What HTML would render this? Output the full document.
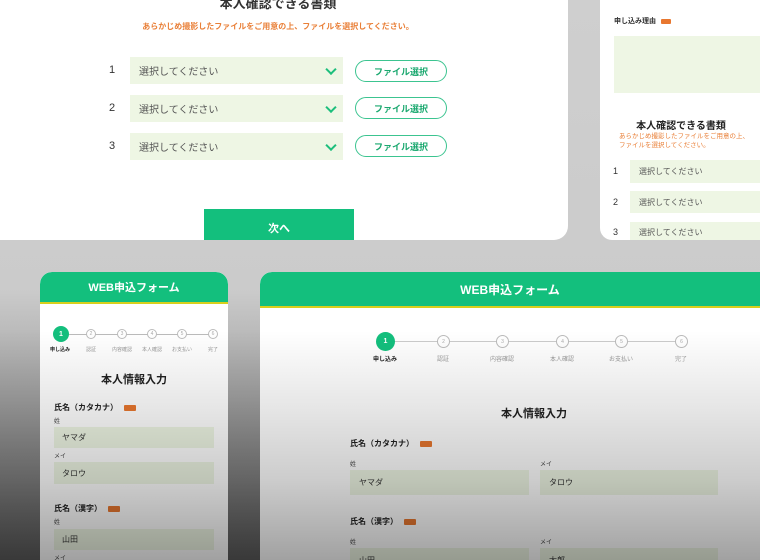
<!DOCTYPE html>
<html><head><meta charset="utf-8"><style>
*{margin:0;padding:0;box-sizing:border-box}
html,body{width:760px;height:560px;overflow:hidden}
body{position:relative;font-family:"Liberation Sans","Noto Sans CJK JP",sans-serif;background:linear-gradient(#cfcfcf 0,#cbcbcb 290px,#a0a0a0 400px,#5a5a5a 560px)}
.a{position:absolute}
.card{position:absolute;background:#fff}
.t{position:absolute;white-space:nowrap}
.sel{position:absolute;background:#eef6e4;color:#555;font-size:10px;padding-left:9px;display:flex;align-items:center}
.chev{position:absolute;right:8px;top:50%;width:8px;height:8px;border-right:2px solid #1cbf7c;border-bottom:2px solid #1cbf7c;transform:translateY(-70%) rotate(45deg)}
.btn{position:absolute;border:1px solid #3cc490;border-radius:12px;color:#1aa86f;font-size:9px;font-weight:bold;display:flex;align-items:center;justify-content:center}
.num{position:absolute;font-size:11px;color:#333}
.hdr{position:absolute;left:0;right:0;top:0;background:#13bf7d;color:#fff;font-weight:bold;display:flex;align-items:center;justify-content:center;border-bottom:2px solid #d8cf1c}
.badge{display:inline-block;background:#e8772f;width:12px;height:6px;border-radius:1px;vertical-align:middle;margin-left:6px}
.inp{position:absolute;background:#eef6e4;color:#333;display:flex;align-items:center}
.lbl{position:absolute;font-weight:bold;color:#222;white-space:nowrap}
.sm{position:absolute;color:#444;white-space:nowrap}
.c{position:absolute;border-radius:50%;border:1px solid #bbb;background:#fff;color:#aaa;display:flex;align-items:center;justify-content:center}
.c1{border:none;background:#13bf7d;color:#fff;font-weight:bold}
.line{position:absolute;height:1px;background:#bbb}
.sl{position:absolute;color:#999;white-space:nowrap;transform:translateX(-50%)}
</style></head><body>

<div class="card" style="left:0;top:-20px;width:568px;height:260px;border-bottom-right-radius:14px"></div>
<div class="t" style="left:0;width:556px;top:-7px;text-align:center;font-size:13px;font-weight:bold;color:#333">本人確認できる書類</div>
<div class="t" style="left:0;width:556px;top:21px;text-align:center;font-size:8px;font-weight:bold;color:#e97f37">あらかじめ撮影したファイルをご用意の上、ファイルを選択してください。</div>
<div class="num" style="left:109px;top:64px">1</div>
<div class="sel" style="left:130px;top:57px;width:213px;height:27px">選択してください<span class="chev"></span></div>
<div class="btn" style="left:355px;top:60px;width:92px;height:22px">ファイル選択</div>
<div class="num" style="left:109px;top:102px">2</div>
<div class="sel" style="left:130px;top:95px;width:213px;height:27px">選択してください<span class="chev"></span></div>
<div class="btn" style="left:355px;top:97px;width:92px;height:22px">ファイル選択</div>
<div class="num" style="left:109px;top:140px">3</div>
<div class="sel" style="left:130px;top:133px;width:213px;height:27px">選択してください<span class="chev"></span></div>
<div class="btn" style="left:355px;top:135px;width:92px;height:22px">ファイル選択</div>
<div class="a" style="left:204px;top:209px;width:150px;height:31px;background:#13bf7d;color:#fff;font-size:11px;font-weight:bold;text-align:center;padding-top:11px">次へ</div>

<div class="card" style="left:600px;top:-20px;width:180px;height:260px;border-bottom-left-radius:12px"></div>
<div class="t" style="left:614px;top:16px;font-size:7px;font-weight:bold;color:#333">申し込み理由<span class="badge" style="width:10px;height:5px;margin-left:5px"></span></div>
<div class="a" style="left:614px;top:36px;width:160px;height:57px;background:#eef6e4"></div>
<div class="t" style="left:606px;width:150px;top:117px;text-align:center;font-size:10px;font-weight:bold;color:#222">本人確認できる書類</div>
<div class="t" style="left:619px;top:132px;font-size:6.5px;line-height:9px;color:#e97f37">あらかじめ撮影したファイルをご用意の上、<br>ファイルを選択してください。</div>
<div class="num" style="left:613px;top:166px;font-size:9px">1</div>
<div class="sel" style="left:630px;top:160px;width:140px;height:23px;font-size:8px">選択してください</div>
<div class="num" style="left:613px;top:197px;font-size:9px">2</div>
<div class="sel" style="left:630px;top:191px;width:140px;height:22px;font-size:8px">選択してください</div>
<div class="num" style="left:613px;top:227px;font-size:9px">3</div>
<div class="sel" style="left:630px;top:222px;width:140px;height:18px;font-size:8px;align-items:flex-start;padding-top:5px">選択してください</div>

<div class="card" style="left:40px;top:272px;width:188px;height:288px;border-radius:12px 12px 0 0;overflow:hidden">
<div class="hdr" style="height:32px;font-size:11px;border-radius:12px 12px 0 0">WEB申込フォーム</div>
</div>
<div class="line" style="left:61px;top:334px;width:152px"></div>
<div class="c c1" style="left:53px;top:326px;width:16px;height:16px;font-size:7px">1</div>
<div class="c" style="left:86px;top:329px;width:10px;height:10px;font-size:5px">2</div>
<div class="c" style="left:117px;top:329px;width:10px;height:10px;font-size:5px">3</div>
<div class="c" style="left:147px;top:329px;width:10px;height:10px;font-size:5px">4</div>
<div class="c" style="left:177px;top:329px;width:10px;height:10px;font-size:5px">5</div>
<div class="c" style="left:208px;top:329px;width:10px;height:10px;font-size:5px">6</div>
<div class="sl" style="left:60px;top:346px;font-size:5px;color:#222;font-weight:bold">申し込み</div>
<div class="sl" style="left:91px;top:346px;font-size:5px">認証</div>
<div class="sl" style="left:122px;top:346px;font-size:5px">内容確認</div>
<div class="sl" style="left:152px;top:346px;font-size:5px">本人確認</div>
<div class="sl" style="left:182px;top:346px;font-size:5px">お支払い</div>
<div class="sl" style="left:213px;top:346px;font-size:5px">完了</div>
<div class="t" style="left:40px;width:188px;top:371px;text-align:center;font-size:11px;font-weight:bold;color:#222">本人情報入力</div>
<div class="lbl" style="left:54px;top:402px;font-size:8px">氏名（カタカナ）<span class="badge"></span></div>
<div class="sm" style="left:54px;top:416px;font-size:6px">姓</div>
<div class="inp" style="left:54px;top:427px;width:160px;height:21px;font-size:8px;padding-left:8px">ヤマダ</div>
<div class="sm" style="left:54px;top:451px;font-size:6px">メイ</div>
<div class="inp" style="left:54px;top:462px;width:160px;height:22px;font-size:8px;padding-left:8px">タロウ</div>
<div class="lbl" style="left:54px;top:503px;font-size:8px">氏名（漢字）<span class="badge"></span></div>
<div class="sm" style="left:54px;top:517px;font-size:6px">姓</div>
<div class="inp" style="left:54px;top:529px;width:160px;height:21px;font-size:8px;padding-left:8px">山田</div>
<div class="sm" style="left:54px;top:553px;font-size:6px">メイ</div>

<div class="card" style="left:260px;top:272px;width:500px;height:288px;border-radius:12px 0 0 0;overflow:hidden">
<div class="hdr" style="height:36px;font-size:12px;border-radius:12px 0 0 0">WEB申込フォーム</div>
</div>
<div class="line" style="left:385px;top:341px;width:296px;background:#ccc"></div>
<div class="c c1" style="left:376px;top:332px;width:19px;height:19px;font-size:7px">1</div>
<div class="c" style="left:437px;top:335px;width:13px;height:13px;font-size:5px">2</div>
<div class="c" style="left:496px;top:335px;width:13px;height:13px;font-size:5px">3</div>
<div class="c" style="left:556px;top:335px;width:13px;height:13px;font-size:5px">4</div>
<div class="c" style="left:615px;top:335px;width:13px;height:13px;font-size:5px">5</div>
<div class="c" style="left:675px;top:335px;width:13px;height:13px;font-size:5px">6</div>
<div class="sl" style="left:385px;top:354px;font-size:6px;color:#222;font-weight:bold">申し込み</div>
<div class="sl" style="left:443px;top:354px;font-size:6px">認証</div>
<div class="sl" style="left:502px;top:354px;font-size:6px">内容確認</div>
<div class="sl" style="left:562px;top:354px;font-size:6px">本人確認</div>
<div class="sl" style="left:621px;top:354px;font-size:6px">お支払い</div>
<div class="sl" style="left:681px;top:354px;font-size:6px">完了</div>
<div class="t" style="left:484px;width:100px;top:405px;text-align:center;font-size:11px;font-weight:bold;color:#222">本人情報入力</div>
<div class="lbl" style="left:350px;top:438px;font-size:8px">氏名（カタカナ）<span class="badge"></span></div>
<div class="sm" style="left:350px;top:459px;font-size:6px">姓</div>
<div class="sm" style="left:540px;top:459px;font-size:6px">メイ</div>
<div class="inp" style="left:350px;top:470px;width:179px;height:25px;font-size:8px;padding-left:9px">ヤマダ</div>
<div class="inp" style="left:540px;top:470px;width:178px;height:25px;font-size:8px;padding-left:9px">タロウ</div>
<div class="lbl" style="left:350px;top:516px;font-size:8px">氏名（漢字）<span class="badge"></span></div>
<div class="sm" style="left:350px;top:537px;font-size:6px">姓</div>
<div class="sm" style="left:540px;top:537px;font-size:6px">メイ</div>
<div class="inp" style="left:350px;top:548px;width:179px;height:25px;font-size:8px;padding-left:9px">山田</div>
<div class="inp" style="left:540px;top:548px;width:178px;height:25px;font-size:8px;padding-left:9px">太郎</div>

<div class="a" style="left:0;top:330px;width:760px;height:230px;background:linear-gradient(rgba(0,0,0,0) 0,rgba(0,0,0,0.1) 80px,rgba(0,0,0,0.2) 150px,rgba(0,0,0,0.37) 230px)"></div>
</body></html>
